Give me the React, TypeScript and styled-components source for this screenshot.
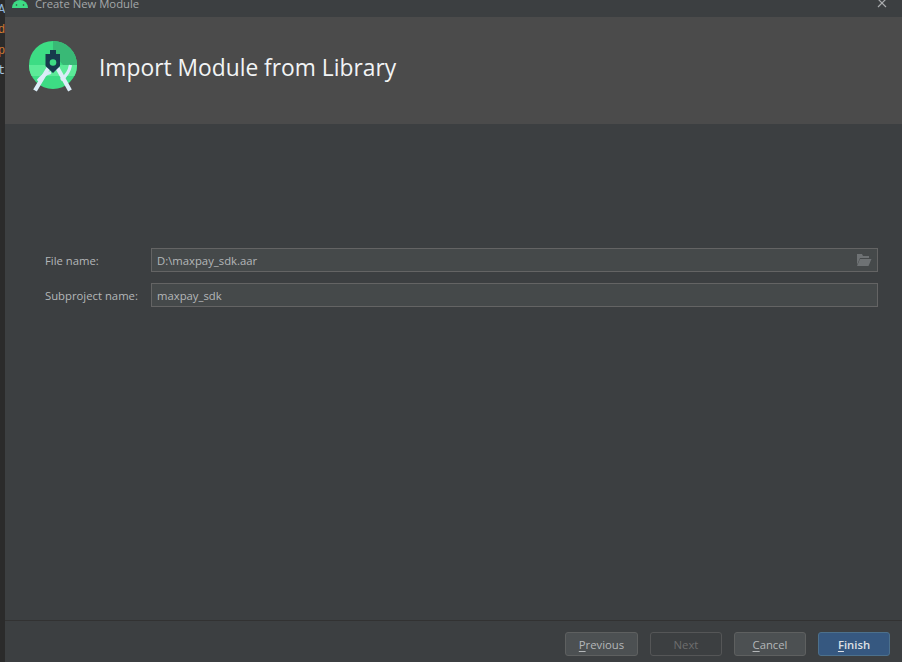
import React from "react";
import styled, { createGlobalStyle } from "styled-components";

const Global = createGlobalStyle`
  html, body { margin: 0; padding: 0; background: #3c3f41; }
  body { font-family: "Open Sans", "Noto Sans", "Liberation Sans", sans-serif; }
`;

const Page = styled.div`
  width: 902px;
  height: 662px;
  display: flex;
  overflow: hidden;
  background: #3c3f41;
`;

const EditorStrip = styled.div`
  width: 5px;
  flex: none;
  height: 100%;
  background: #2b2b2b;
  display: flex;
  flex-direction: column;
  align-items: flex-end;
  overflow: hidden;
`;

const StripLetter = styled.div<{ $color: string }>`
  height: 20.4px;
  line-height: 20px;
  font-size: 12px;
  color: ${(p) => p.$color};
  white-space: nowrap;
  width: 5px;
  font-family: "Liberation Mono", monospace;
  text-indent: -2px;
`;

const Dialog = styled.div`
  flex: 1;
  min-width: 0;
  display: flex;
  flex-direction: column;
`;

const TitleBar = styled.div`
  height: 17px;
  flex: none;
  box-sizing: border-box;
  background: #3c3f41;
  display: flex;
  align-items: flex-end;
  justify-content: space-between;
  padding: 0 15px 5px 7px;
  overflow: hidden;
`;

const TitleGroup = styled.div`
  display: flex;
  align-items: flex-end;
  gap: 7px;
`;

const TitleIcon = styled.svg`
  margin-bottom: 4px;
  flex: none;
`;

const TitleText = styled.span`
  font-size: 11.3px;
  line-height: 16px;
  color: #a4a7a9;
  white-space: nowrap;
`;

const Header = styled.div`
  height: 107px;
  flex: none;
  background: #4b4b4b;
  display: flex;
  align-items: center;
  padding: 0 0 6px 24px;
  gap: 22px;
  box-sizing: border-box;
`;

const Heading = styled.h1`
  margin: 0;
  font-size: 22.8px;
  font-weight: 400;
  color: #f2f4f5;
  white-space: nowrap;
`;

const Body = styled.div`
  flex: 1;
  display: flex;
  flex-direction: column;
  justify-content: flex-start;
  gap: 11px;
  padding: 124px 24px 0 40px;
  box-sizing: border-box;
`;

const FormRow = styled.div`
  display: flex;
  align-items: center;
`;

const Label = styled.label`
  width: 106px;
  flex: none;
  font-size: 11.3px;
  color: #b4b7b9;
  white-space: nowrap;
`;

const Field = styled.div`
  flex: 1;
  height: 24px;
  box-sizing: border-box;
  border: 1px solid #646464;
  background: #45494a;
  display: flex;
  align-items: center;
  justify-content: space-between;
  padding: 0 5px;
  font-size: 11.3px;
  color: #b4b7b9;
`;

const Footer = styled.div`
  height: 42px;
  flex: none;
  box-sizing: border-box;
  border-top: 1px solid #323232;
  display: flex;
  justify-content: flex-end;
  gap: 12px;
  padding: 11px 12px 0 0;
`;

const Button = styled.button<{ $variant?: "primary" | "disabled"; $wide?: boolean }>`
  width: ${(p) => (p.$wide ? 73 : 72)}px;
  height: 24px;
  box-sizing: border-box;
  margin: 0;
  padding: 0;
  border-radius: 3px;
  font-family: inherit;
  font-size: 11.3px;
  font-weight: ${(p) => (p.$variant === "primary" ? 600 : 400)};
  border: 1px solid
    ${(p) =>
      p.$variant === "primary" ? "#4c708c" : p.$variant === "disabled" ? "#555657" : "#5e6060"};
  background: ${(p) =>
    p.$variant === "primary" ? "#365880" : p.$variant === "disabled" ? "#3c3f41" : "#4c5052"};
  color: ${(p) =>
    p.$variant === "primary" ? "#dfe1e5" : p.$variant === "disabled" ? "#6e6e6e" : "#b4b7b9"};
  u { text-underline-offset: 2px; }
`;

const AndroidHead = () => (
  <TitleIcon width="16" height="15" viewBox="0 0 16 15">
    <path d="M0 15a8 8 0 0 1 16 0z" fill="#3ddc84" />
    <circle cx="4.500" cy="12" r="0.8" fill="#3c3f41" />
    <circle cx="11.500" cy="12" r="0.8" fill="#3c3f41" />
  </TitleIcon>
);

const StudioLogo = () => (
  <svg width="48" height="54" viewBox="0 0 48 54">
    <circle cx="24" cy="24" r="24" fill="#3ddc84" />
    <path d="M0 24h48a24 24 0 0 1-2.500 11H2.500A24 24 0 0 1 0 24z" fill="#5cea98" />
    <path d="M24 0A24 24 0 0 1 48 24H34L24 12z" fill="#39b976" />
    <path d="M9 40Q14 33 22 31.500M41.500 24Q40 33 32 39" stroke="#d7ebf8" strokeWidth="3.200" fill="none" />
    <path d="M19.500 27L6 49.500M28.500 27L41 49.500" stroke="#dcecf8" strokeWidth="4.200" fill="none" />
    <path d="M21 9h6v4h4v12L24 32l-7.500-7V13H21z" fill="#173a4d" />
    <circle cx="24" cy="21.500" r="3.300" fill="#3ddc84" />
  </svg>
);

const FolderIcon = () => (
  <svg width="16" height="12" viewBox="0 0 16 12">
    <path d="M1 0h5l1 2h6v2H4L1 11z" fill="#6e7274" />
    <path d="M4 5h11.500l-3 7H1z" fill="#6e7274" />
  </svg>
);

const CloseGlyph = styled.svg`
  margin-bottom: 4px;
  flex: none;
`;

const CloseIcon = () => (
  <CloseGlyph width="10" height="10" viewBox="0 0 10 10">
    <path d="M1 1l8 8M9 1l-8 8" stroke="#a9abad" strokeWidth="1.200" fill="none" />
  </CloseGlyph>
);

export default function App() {
  return (
    <Page>
      <Global />
      <EditorStrip>
        <StripLetter $color="#8fb4d8">A</StripLetter>
        <StripLetter $color="#cc7832">d</StripLetter>
        <StripLetter $color="#cc7832">p</StripLetter>
        <StripLetter $color="#a9c7e0">t</StripLetter>
      </EditorStrip>
      <Dialog>
        <TitleBar>
          <TitleGroup>
            <AndroidHead />
            <TitleText>Create New Module</TitleText>
          </TitleGroup>
          <CloseIcon />
        </TitleBar>
        <Header>
          <StudioLogo />
          <Heading>Import Module from Library</Heading>
        </Header>
        <Body>
          <FormRow>
            <Label>File name:</Label>
            <Field>
              <span>D:\maxpay_sdk.aar</span>
              <FolderIcon />
            </Field>
          </FormRow>
          <FormRow>
            <Label>Subproject name:</Label>
            <Field>
              <span>maxpay_sdk</span>
            </Field>
          </FormRow>
        </Body>
        <Footer>
          <Button $wide><u>P</u>revious</Button>
          <Button $variant="disabled">Next</Button>
          <Button><u>C</u>ancel</Button>
          <Button $variant="primary"><u>F</u>inish</Button>
        </Footer>
      </Dialog>
    </Page>
  );
}
